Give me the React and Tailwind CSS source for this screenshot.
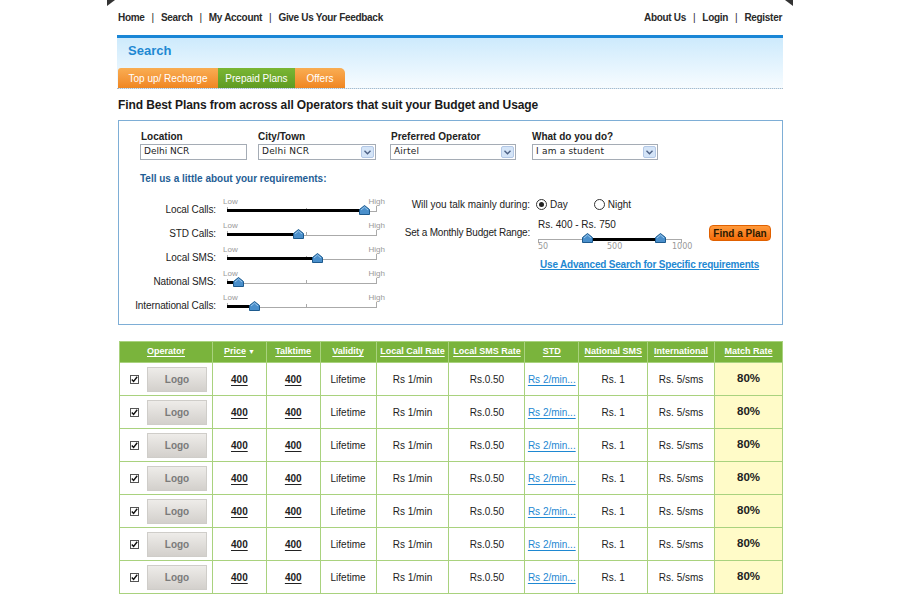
import React from "react";

const font = { fontFamily: '"Liberation Sans", Arial, sans-serif' };
const small = { fontFamily: '"DejaVu Sans", Verdana, sans-serif' };

const Thumb = () => (
  <svg width="11" height="10" viewBox="0 0 11 10">
    <path d="M5.5 0.5 L10.5 4.5 L10.5 9.5 L0.5 9.5 L0.5 4.5 Z" fill="#4a8fcb" stroke="#1d5a8e" />
    <path d="M2 5 L5.5 2 L9 5" fill="none" stroke="#9cc8ee" strokeWidth="1" />
  </svg>
);

const Slider = ({ pos }) => (
  <div className="relative w-[150px] h-[24px]">
    <span className="absolute left-[-4px] top-[0px] text-[8px] leading-[10px] text-[#999]">Low</span>
    <span className="absolute right-[-8px] top-[0px] text-[8px] leading-[10px] text-[#999]">High</span>
    <div className="absolute left-0 right-0 top-[14px] h-px bg-[#aaa]" />
    <div className="absolute left-0 top-[10px] w-px h-[5px] bg-[#aaa]" />
    <div className="absolute left-[79px] top-[11px] w-px h-[4px] bg-[#aaa]" />
    <div className="absolute right-0 top-[9px] w-px h-[6px] bg-[#aaa]" />
    <div className="absolute left-0 top-[12px] h-[3px] bg-black" style={{ width: pos * 150 }} />
    <div className="absolute top-[8px]" style={{ left: pos * 150 - 5 }}>
      <Thumb />
    </div>
  </div>
);

const Select = ({ value, w }) => (
  <div className={`${w} h-[16px] border border-[#a5acb5] bg-white flex items-center justify-between pl-[3px] pr-px`}>
    <span className="text-[9px] tracking-[0.2px]" style={small}>{value}</span>
    <span className="w-[13px] h-[12px] rounded-[2px] bg-[#d4e4f7] border border-[#b3c8e6] flex items-center justify-center">
      <svg width="7" height="5" viewBox="0 0 7 5"><path d="M0.5 0.8 L3.5 3.8 L6.5 0.8" fill="none" stroke="#4d6185" strokeWidth="1.4" /></svg>
    </span>
  </div>
);

const sliders = [
  ["Local Calls:", 0.91],
  ["STD Calls:", 0.47],
  ["Local SMS:", 0.6],
  ["National SMS:", 0.07],
  ["International Calls:", 0.18],
];

const cols = [
  ["Operator", 93],
  ["Price", 54],
  ["Talktime", 54],
  ["Validity", 56],
  ["Local Call Rate", 73],
  ["Local SMS Rate", 76],
  ["STD", 54],
  ["National SMS", 69],
  ["International", 67],
  ["Match Rate", 68],
];

const Radio = ({ on }) => (
  <span className="w-[11px] h-[11px] rounded-full border border-[#333] bg-white flex items-center justify-center">
    {on && <span className="w-[5px] h-[5px] rounded-full bg-[#222]" />}
  </span>
);

const Check = () => (
  <span className="w-[9px] h-[9px] border border-[#555] bg-white flex items-center justify-center">
    <svg width="7" height="7" viewBox="0 0 7 7"><path d="M0.8 3.5 L2.6 5.5 L6.2 0.8" fill="none" stroke="#111" strokeWidth="1.4" /></svg>
  </span>
);

export default function App() {
  return (
    <div className="w-[900px] h-[600px] bg-white relative overflow-hidden text-[#222]" style={font}>
      {/* corner marks */}
      <div className="absolute left-[107px] top-0 w-0 h-0 border-t-[6px] border-t-[#333] border-r-[8px] border-r-transparent" />
      <div className="absolute left-[785px] top-0 w-0 h-0 border-t-[6px] border-t-[#333] border-l-[8px] border-l-transparent" />

      <div className="w-[666px] mx-auto">
        {/* top nav */}
        <div className="h-[35px] flex items-center justify-between pl-px pr-px text-[10px] font-bold text-[#2a2a2a] tracking-[-0.3px]">
          <div className="flex items-center">
            <span>Home</span><span className="mx-[7px] font-normal">|</span>
            <span>Search</span><span className="mx-[7px] font-normal">|</span>
            <span>My Account</span><span className="mx-[7px] font-normal">|</span>
            <span>Give Us Your Feedback</span>
          </div>
          <div className="flex items-center">
            <span>About Us</span><span className="mx-[7px] font-normal">|</span>
            <span>Login</span><span className="mx-[7px] font-normal">|</span>
            <span>Register</span>
          </div>
        </div>

        {/* search header */}
        <div className="h-[3px] bg-[#1a86d6]" />
        <div className="bg-gradient-to-b from-[#cdeafc] to-[#f7fcff] border-b border-dotted border-[#b0b8c4]">
          <div className="h-[30px] pb-[5px] flex items-center pl-[11px] text-[13px] font-bold text-[#1e88d2]">Search</div>
          <div className="flex h-[20px] text-[10px] text-white pl-px">
            <div className="w-[100px] flex items-center justify-center rounded-tl-[3px] bg-gradient-to-b from-[#f9ad52] to-[#f0861f]">Top up/ Recharge</div>
            <div className="w-[77px] flex items-center justify-center bg-gradient-to-b from-[#7ab634] to-[#5f9b22]">Prepaid Plans</div>
            <div className="w-[50px] flex items-center justify-center rounded-tr-[5px] bg-gradient-to-b from-[#f9ad52] to-[#f0861f]">Offers</div>
          </div>
        </div>

        <div className="h-[31px] flex items-center pl-px text-[12px] font-bold text-[#1a1a1a] tracking-[-0.1px]">
          Find Best Plans from across all Operators that suit your Budget and Usage
        </div>

        {/* form */}
        <div className="ml-px h-[205px] border border-[#7eaed6] bg-white">
          <div className="flex pt-[9px] pl-[21px] text-[10px] font-bold">
            <div className="w-[107px] mr-[11px]">
              <div className="h-[14px] leading-[14px] pl-px">Location</div>
              <div className="w-[107px] h-[16px] border border-[#a5acb5] flex items-center pl-[3px] text-[9px] font-normal" style={small}>Delhi NCR</div>
            </div>
            <div className="mr-[14px]">
              <div className="h-[14px] leading-[14px]">City/Town</div>
              <div className="font-normal"><Select value="Delhi NCR" w="w-[118px]" /></div>
            </div>
            <div className="mr-[16px]">
              <div className="h-[14px] leading-[14px] pl-px">Preferred Operator</div>
              <div className="font-normal"><Select value="Airtel" w="w-[126px]" /></div>
            </div>
            <div>
              <div className="h-[14px] leading-[14px]">What do you do?</div>
              <div className="font-normal"><Select value="I am a student" w="w-[126px]" /></div>
            </div>
          </div>

          <div className="pl-[21px] mt-[12px] h-[14px] leading-[14px] text-[10px] font-bold text-[#1f5e95]">
            Tell us a little about your requirements:
          </div>

          <div className="flex mt-[11px]">
            <div className="flex flex-col">
              {sliders.map(([label, pos]) => (
                <div key={label} className="h-[24px] flex items-center">
                  <div className="w-[98px] pr-px text-right text-[10px] pt-[1px] whitespace-nowrap tracking-[-0.1px]">{label}</div>
                  <div className="ml-[10px]"><Slider pos={pos} /></div>
                </div>
              ))}
            </div>

            <div className="ml-[22px] -mt-[4px] text-[10px]">
              <div className="flex items-center h-[22px]">
                <div className="w-[131px] text-right whitespace-nowrap">Will you talk mainly during:</div>
                <div className="ml-[6px] flex items-center gap-[3px]"><Radio on /><span>Day</span></div>
                <div className="ml-[26px] flex items-center gap-[3px]"><Radio /><span>Night</span></div>
              </div>
              <div className="flex items-start mt-[3px]">
                <div className="w-[131px] text-right pt-[7px] whitespace-nowrap tracking-[-0.2px]">Set a Monthly Budget Range:</div>
                <div className="ml-[8px] w-[144px]">
                  <div className="h-[13px] leading-[13px]">Rs. 400 - Rs. 750</div>
                  <div className="relative h-[22px]">
                    <div className="absolute left-0 right-0 top-[8px] h-px bg-[#aaa]" />
                    <div className="absolute left-0 top-[8px] w-px h-[4px] bg-[#aaa]" />
                    <div className="absolute right-0 top-[8px] w-px h-[4px] bg-[#aaa]" />
                    <div className="absolute top-[7px] h-[3px] bg-black" style={{ left: 0.34 * 144, width: (0.85 - 0.34) * 144 }} />
                    <div className="absolute top-[2px]" style={{ left: 0.34 * 144 - 5 }}><Thumb /></div>
                    <div className="absolute top-[2px]" style={{ left: 0.85 * 144 - 5 }}><Thumb /></div>
                    <span className="absolute left-0 top-[10px] text-[8px] text-[#999]" style={small}>50</span>
                    <span className="absolute left-[69px] top-[10px] text-[8px] text-[#999]" style={small}>500</span>
                    <span className="absolute left-[134px] top-[10px] text-[8px] text-[#999]" style={small}>1000</span>
                  </div>
                </div>
                <button className="ml-[27px] mt-[7px] w-[62px] h-[16px] rounded-[4px] bg-gradient-to-b from-[#ff9a3a] to-[#f56a00] border border-[#e06000] text-[10px] font-bold text-[#2a1a00] flex items-center justify-center whitespace-nowrap">
                  Find a Plan
                </button>
              </div>
              <div className="ml-[141px] mt-[4px] text-[10px] font-bold text-[#1e88d2] underline whitespace-nowrap tracking-[-0.2px]">
                Use Advanced Search for Specific requirements
              </div>
            </div>
          </div>
        </div>

        {/* results table */}
        <table className="mt-[16px] ml-[2px] border-collapse text-[10px] table-fixed">
          <thead>
            <tr className="h-[21px] bg-[#7ab43c]">
              {cols.map(([name, w]) => (
                <th key={name} className="border border-[#a9d27e] p-0 font-bold text-[9px] text-white whitespace-nowrap" style={{ width: w }}>
                  <span className="underline underline-offset-2">{name}</span>
                  {name === "Price" && <span className="text-[7px] ml-[2px]">▼</span>}
                </th>
              ))}
            </tr>
          </thead>
          <tbody>
            {Array.from({ length: 7 }).map((_, i) => (
              <tr key={i} className="h-[33px]">
                <td className="border border-[#a9d27e] p-0">
                  <div className="flex items-center pl-[10px]">
                    <Check />
                    <div className="ml-[8px] w-[60px] h-[25px] bg-gradient-to-b from-[#eeece9] to-[#d3d0cc] border border-[#cfcdc9] flex items-center justify-center text-[10px] font-bold text-[#7a7a7a]">
                      Logo
                    </div>
                  </div>
                </td>
                <td className="border border-[#a9d27e] text-center font-bold"><span className="underline underline-offset-2">400</span></td>
                <td className="border border-[#a9d27e] text-center font-bold"><span className="underline underline-offset-2">400</span></td>
                <td className="border border-[#a9d27e] text-center">Lifetime</td>
                <td className="border border-[#a9d27e] text-center">Rs 1/min</td>
                <td className="border border-[#a9d27e] text-center">Rs.0.50</td>
                <td className="border border-[#a9d27e] text-center text-[#1e88d2]"><span className="underline underline-offset-2">Rs 2/min...</span></td>
                <td className="border border-[#a9d27e] text-center">Rs. 1</td>
                <td className="border border-[#a9d27e] text-center">Rs. 5/sms</td>
                <td className="border border-[#a9d27e] text-center bg-[#fffbc8] font-bold text-[11.5px]">80%</td>
              </tr>
            ))}
          </tbody>
        </table>
      </div>
    </div>
  );
}
